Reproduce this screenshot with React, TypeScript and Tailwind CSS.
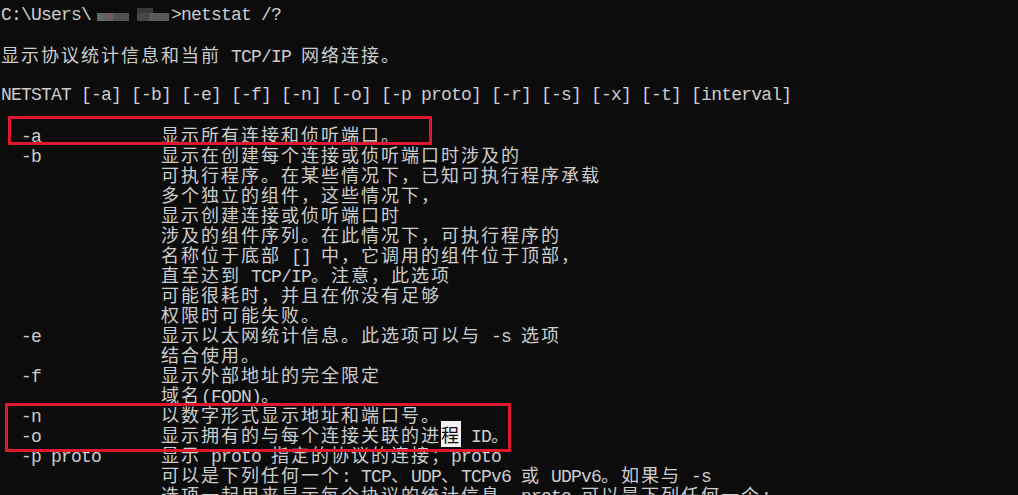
import React from 'react';

const LATIN = "font-['Liberation_Mono',monospace] text-[18px] tracking-[-0.8px]";
const CJK = "font-['Noto_Sans_CJK_SC',sans-serif] text-[18px] tracking-[2px]";
const CJK_RE = /([\u2e80-\u9fff\u3000-\u303f\uff00-\uffef]+)/;

function Txt({ text }: { text: string }) {
  const parts = text.split(CJK_RE);
  return (
    <>
      {parts.map((p, i) =>
        p === '' ? null : (
          <span key={i} className={i % 2 === 1 ? CJK : LATIN}>
            {p}
          </span>
        )
      )}
    </>
  );
}

function Line({ children }: { children?: React.ReactNode }) {
  return <div className="h-5 leading-5 whitespace-pre text-[#cccccc]">{children}</div>;
}

const PAD = '                ';

const BODY: string[] = [
  '  -a            显示所有连接和侦听端口。',
  '  -b            显示在创建每个连接或侦听端口时涉及的',
  PAD + '可执行程序。在某些情况下，已知可执行程序承载',
  PAD + '多个独立的组件，这些情况下，',
  PAD + '显示创建连接或侦听端口时',
  PAD + '涉及的组件序列。在此情况下，可执行程序的',
  PAD + '名称位于底部 [] 中，它调用的组件位于顶部，',
  PAD + '直至达到 TCP/IP。注意，此选项',
  PAD + '可能很耗时，并且在你没有足够',
  PAD + '权限时可能失败。',
  '  -e            显示以太网统计信息。此选项可以与 -s 选项',
  PAD + '结合使用。',
  '  -f            显示外部地址的完全限定',
  PAD + '域名(FQDN)。',
  '  -n            以数字形式显示地址和端口号。',
];

const TAIL: string[] = [
  '  -p proto      显示 proto 指定的协议的连接；proto',
  PAD + '可以是下列任何一个: TCP、UDP、TCPv6 或 UDPv6。如果与 -s',
  PAD + '选项一起用来显示每个协议的统计信息，proto 可以是下列任何一个:',
];

// pixelated user name
function Blur() {
  return (
    <span className="inline-flex w-[80px] h-5 align-top items-end gap-[8px] pl-[6px] pb-[3px]">
      <span className="flex h-[8px] w-[32px]">
        <span className="w-[8px] bg-[#5b6b68]" />
        <span className="w-[8px] bg-[#6a5a5c]" />
        <span className="w-[16px] bg-[#505050]" />
      </span>
      <span className="flex flex-col w-[32px]">
        <span className="h-[5px] w-[16px] bg-[#3a3a3a]" />
        <span className="flex h-[8px]">
          <span className="w-[12px] bg-[#474747]" />
          <span className="w-[20px] bg-[#5a5a5a]" />
        </span>
      </span>
    </span>
  );
}

export default function App() {
  return (
    <div className="relative w-[1018px] h-[495px] overflow-hidden bg-[#0c0c0c]">
      <div className="pt-[4px] pl-[1px]">
        <Line>
          <Txt text="C:\Users\" />
          <Blur />
          <Txt text=">netstat /?" />
        </Line>
        <Line />
        <Line>
          <Txt text="显示协议统计信息和当前 TCP/IP 网络连接。" />
        </Line>
        <Line />
        <Line>
          <Txt text="NETSTAT [-a] [-b] [-e] [-f] [-n] [-o] [-p proto] [-r] [-s] [-x] [-t] [interval]" />
        </Line>
        <Line />
        {BODY.map((l, i) => (
          <Line key={i}>
            <Txt text={l} />
          </Line>
        ))}
        <Line>
          <Txt text="  -o            显示拥有的与每个连接关联的进" />
          <span className={CJK + ' bg-[#f2f2f2] text-[#0c0c0c]'}>程</span>
          <Txt text=" ID。" />
        </Line>
        {TAIL.map((l, i) => (
          <Line key={i}>
            <Txt text={l} />
          </Line>
        ))}
      </div>

      {/* red highlight boxes drawn over the console text */}
      <div className="absolute left-[8px] top-[116px] w-[424px] h-[29px] border-[3px] border-[#e0182d]" />
      <div className="absolute left-[5px] top-[403px] w-[506px] h-[49px] border-[3px] border-[#e0182d]" />
    </div>
  );
}
